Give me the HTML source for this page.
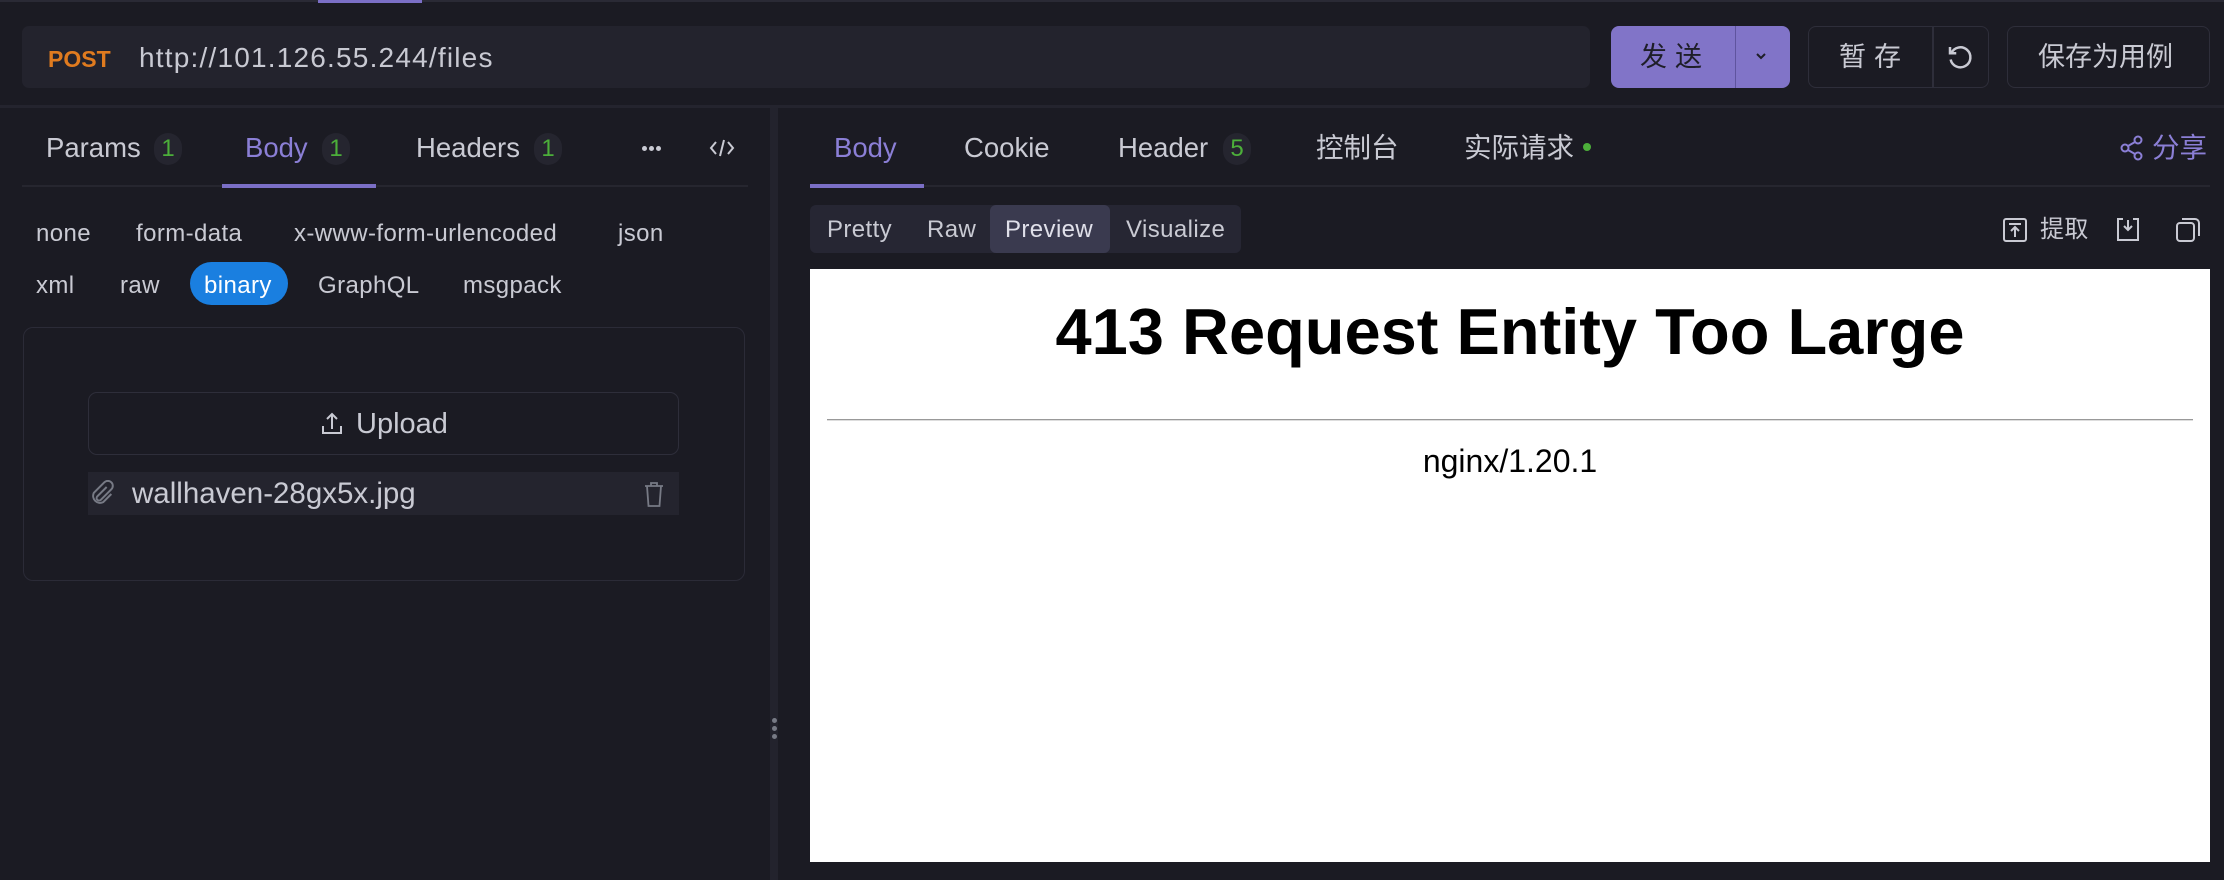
<!DOCTYPE html>
<html><head><meta charset="utf-8"><style>
*{box-sizing:border-box;margin:0;padding:0}
body{width:2224px;height:880px;background:#1b1b23;font-family:"Liberation Sans","Noto Sans CJK SC",sans-serif;color:#c9cad3;position:relative;overflow:hidden}
.a{position:absolute;white-space:nowrap}
.badge{position:absolute;width:28px;height:32px;border-radius:14px;background:#25252f;color:#4caf3a;font-size:24px;text-align:center;line-height:32px}
.t{font-size:27.5px;line-height:32px}
.s{font-size:24px;line-height:28px;letter-spacing:0.4px}
</style></head><body>
<div class="a" style="left:0;top:0;width:2224px;height:2px;background:#2a2a35"></div>
<div class="a" style="left:318px;top:0;width:104px;height:3px;background:#7b6fc6"></div>

<div class="a" style="left:22px;top:26px;width:1568px;height:62px;background:#23232d;border-radius:7px"></div>
<div class="a" style="left:48px;top:45px;font-size:23px;font-weight:bold;color:#e07b1f;line-height:28px">POST</div>
<div class="a" style="left:139px;top:41px;font-size:28px;color:#c8c9d2;line-height:34px;letter-spacing:1.2px">http://101.126.55.244/files</div>

<div class="a" style="left:1611px;top:26px;width:179px;height:62px;background:#8174c8;border-radius:8px"></div>
<div class="a" style="left:1735px;top:26px;width:1px;height:62px;background:#5f549e"></div>
<div class="a" style="left:1640px;top:40px;font-size:27px;color:#1e1e28;letter-spacing:8px;line-height:34px">发送</div>
<svg class="a" style="left:1754px;top:50px" width="14" height="12" viewBox="0 0 14 12"><path d="M3 4l4 4 4-4" stroke="#1e1e28" stroke-width="2" fill="none"/></svg>

<div class="a" style="left:1808px;top:26px;width:181px;height:62px;border:1.5px solid #2e2e3a;border-radius:8px"></div>
<div class="a" style="left:1932px;top:26px;width:1.5px;height:62px;background:#2e2e3a"></div>
<div class="a" style="left:1839px;top:40px;font-size:27px;color:#c9cad3;letter-spacing:8px;line-height:34px">暂存</div>
<svg class="a" style="left:1945px;top:42px" width="30" height="30" viewBox="0 0 24 24"><path d="M5 9a8 8 0 1 1-0.5 5" stroke="#c9cad3" stroke-width="2" fill="none"/><path d="M4 4v5h5" stroke="#c9cad3" stroke-width="2" fill="none"/></svg>

<div class="a" style="left:2007px;top:26px;width:203px;height:62px;border:1.5px solid #2e2e3a;border-radius:8px"></div>
<div class="a" style="left:2038px;top:40px;font-size:27px;color:#c9cad3;line-height:34px">保存为用例</div>

<div class="a" style="left:0;top:105px;width:2224px;height:3px;background:#24242e"></div>
<div class="a" style="left:770px;top:108px;width:8px;height:772px;background:#23232d"></div>
<div class="a" style="left:772px;top:718px;width:5px;height:5px;border-radius:3px;background:#777a85"></div>
<div class="a" style="left:772px;top:726px;width:5px;height:5px;border-radius:3px;background:#777a85"></div>
<div class="a" style="left:772px;top:734px;width:5px;height:5px;border-radius:3px;background:#777a85"></div>

<div class="a t" style="left:46px;top:132px">Params</div>
<div class="badge" style="left:154px;top:133px">1</div>
<div class="a t" style="left:245px;top:132px;color:#8b7fd6">Body</div>
<div class="badge" style="left:322px;top:133px">1</div>
<div class="a t" style="left:416px;top:132px">Headers</div>
<div class="badge" style="left:534px;top:133px">1</div>
<div class="a" style="left:642px;top:146px;width:5px;height:5px;border-radius:3px;background:#c9cad3"></div>
<div class="a" style="left:649px;top:146px;width:5px;height:5px;border-radius:3px;background:#c9cad3"></div>
<div class="a" style="left:656px;top:146px;width:5px;height:5px;border-radius:3px;background:#c9cad3"></div>
<svg class="a" style="left:708px;top:138px" width="28" height="20" viewBox="0 0 28 20"><path d="M8 4l-5 6 5 6M20 4l5 6-5 6M16 2l-4 16" stroke="#c9cad3" stroke-width="2" fill="none"/></svg>
<div class="a" style="left:22px;top:185px;width:726px;height:2px;background:#26262f"></div>
<div class="a" style="left:222px;top:184px;width:154px;height:4px;background:#7b6fc6"></div>

<div class="a s" style="left:36px;top:220px">none</div>
<div class="a s" style="left:136px;top:220px">form-data</div>
<div class="a s" style="left:294px;top:220px">x-www-form-urlencoded</div>
<div class="a s" style="left:618px;top:220px">json</div>
<div class="a s" style="left:36px;top:272px">xml</div>
<div class="a s" style="left:120px;top:272px">raw</div>
<div class="a" style="left:190px;top:262px;width:98px;height:43px;border-radius:22px;background:#1a7fe0"></div>
<div class="a s" style="left:204px;top:272px;color:#fff">binary</div>
<div class="a s" style="left:318px;top:272px">GraphQL</div>
<div class="a s" style="left:463px;top:272px">msgpack</div>

<div class="a" style="left:23px;top:327px;width:722px;height:254px;border:1.5px solid #2b2b37;border-radius:10px"></div>
<div class="a" style="left:88px;top:392px;width:591px;height:63px;border:1.5px solid #2e2e3a;border-radius:9px"></div>
<svg class="a" style="left:320px;top:410px" width="24" height="26" viewBox="0 0 24 26"><path d="M12 19V4M7 9l5-5 5 5M3 16v7h18v-7" stroke="#c9cad3" stroke-width="2" fill="none"/></svg>
<div class="a" style="left:356px;top:407px;font-size:29px;line-height:34px">Upload</div>
<div class="a" style="left:88px;top:472px;width:591px;height:43px;background:#24242e"></div>
<svg class="a" style="left:88px;top:480px" width="28" height="28" viewBox="0 0 24 24"><path d="M16 6l-8 8a2 2 0 0 0 3 3l9-9a4 4 0 0 0-6-6l-9 9a6 6 0 0 0 8 8l7-7" stroke="#777a85" stroke-width="1.7" fill="none"/></svg>
<div class="a" style="left:132px;top:477px;font-size:29.5px;line-height:34px">wallhaven-28gx5x.jpg</div>
<svg class="a" style="left:642px;top:480px" width="24" height="28" viewBox="0 0 24 28"><path d="M3 6h18M9 6V3h6v3M5 6l1.5 20h11L19 6" stroke="#777a85" stroke-width="1.8" fill="none"/></svg>

<div class="a t" style="left:834px;top:132px;color:#8b7fd6">Body</div>
<div class="a t" style="left:964px;top:132px">Cookie</div>
<div class="a t" style="left:1118px;top:132px">Header</div>
<div class="badge" style="left:1223px;top:133px">5</div>
<div class="a t" style="left:1316px;top:132px">控制台</div>
<div class="a t" style="left:1464px;top:132px">实际请求</div>
<div class="a" style="left:1583px;top:143px;width:8px;height:8px;border-radius:4px;background:#4caf3a"></div>
<svg class="a" style="left:2119px;top:134px" width="26" height="28" viewBox="0 0 26 28"><circle cx="19" cy="6" r="3.5" stroke="#8b7fd6" stroke-width="2" fill="none"/><circle cx="6" cy="14" r="3.5" stroke="#8b7fd6" stroke-width="2" fill="none"/><circle cx="19" cy="22" r="3.5" stroke="#8b7fd6" stroke-width="2" fill="none"/><path d="M9 12l7-4M9 16l7 4" stroke="#8b7fd6" stroke-width="2"/></svg>
<div class="a t" style="left:2152px;top:132px;color:#8b7fd6">分享</div>
<div class="a" style="left:810px;top:185px;width:1400px;height:2px;background:#26262f"></div>
<div class="a" style="left:810px;top:184px;width:114px;height:4px;background:#7b6fc6"></div>

<div class="a" style="left:810px;top:205px;width:431px;height:48px;background:#262633;border-radius:6px"></div>
<div class="a" style="left:990px;top:205px;width:120px;height:48px;background:#3a3a4f;border-radius:6px"></div>
<div class="a s" style="left:827px;top:216px">Pretty</div>
<div class="a s" style="left:927px;top:216px">Raw</div>
<div class="a s" style="left:1005px;top:216px;color:#e0e0ea">Preview</div>
<div class="a s" style="left:1126px;top:216px">Visualize</div>

<svg class="a" style="left:2003px;top:218px" width="24" height="24" viewBox="0 0 24 24"><rect x="1" y="1" width="22" height="22" rx="2" stroke="#c9cad3" stroke-width="2" fill="none"/><path d="M6 6h12M12 19V9M8 13l4-4 4 4" stroke="#c9cad3" stroke-width="2" fill="none"/></svg>
<div class="a s" style="left:2040px;top:216px">提取</div>
<svg class="a" style="left:2116px;top:217px" width="24" height="25" viewBox="0 0 24 25"><path d="M7 2H2v21h20V2h-5M12 3v10M8 9l4 4 4-4" stroke="#c9cad3" stroke-width="2" fill="none"/></svg>
<svg class="a" style="left:2176px;top:217px" width="25" height="25" viewBox="0 0 25 25"><rect x="1" y="6" width="17" height="18" rx="3" stroke="#c9cad3" stroke-width="2" fill="none"/><path d="M6 2h13a4 4 0 0 1 4 4v13" stroke="#c9cad3" stroke-width="2" fill="none"/></svg>

<div class="a" style="left:810px;top:269px;width:1400px;height:593px;background:#fff"></div>
<div class="a" style="left:810px;top:293px;width:1400px;text-align:center;font-size:65px;font-weight:bold;color:#000;line-height:78px">413 Request Entity Too Large</div>
<div class="a" style="left:827px;top:419px;width:1366px;height:2px;background:#999;border-bottom:1px solid #ddd"></div>
<div class="a" style="left:810px;top:442px;width:1400px;text-align:center;font-size:32px;color:#000;line-height:38px">nginx/1.20.1</div>
</body></html>
